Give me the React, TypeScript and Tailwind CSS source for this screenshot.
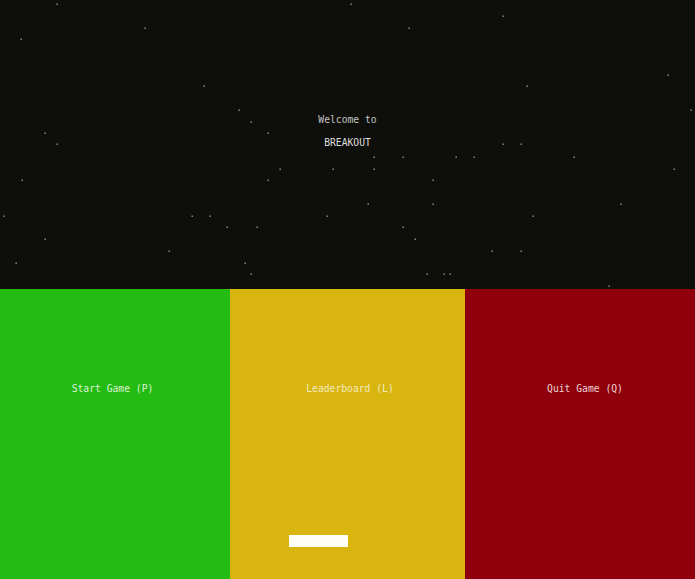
const stars: [number, number][] = [
  [57, 4], [145, 28], [21, 39], [204, 86], [239, 110], [251, 122], [268, 133], [45, 133], [57, 144],
  [351, 4], [503, 16], [409, 28], [668, 75], [527, 86], [691, 110], [503, 144], [521, 144],
  [280, 169], [333, 169], [22, 180], [268, 180], [4, 216], [192, 216], [210, 216], [327, 216],
  [227, 227], [257, 227], [45, 239], [169, 251], [16, 263], [245, 263], [251, 274],
  [374, 157], [403, 157], [456, 157], [474, 157], [574, 157], [374, 169], [674, 169], [433, 180],
  [368, 204], [433, 204], [621, 204], [533, 216], [403, 227], [415, 239], [492, 251], [521, 251],
  [427, 274], [444, 274], [450, 274], [609, 286],
];

const mono = { fontFamily: '"DejaVu Sans Mono", monospace' };

export default function App() {
  return (
    <div className="w-[695px] h-[579px] bg-[#0e0f0b] overflow-hidden" style={mono}>
      <div className="relative h-[289px] flex flex-col items-center pt-[114px] gap-[11px] text-[9.7px] leading-[12px]">
        <svg className="absolute inset-0" width="695" height="289">
          {stars.map(([x, y], i) => (
            <rect key={i} x={x - 0.5} y={y - 0.5} width="1.4" height="1.4" fill="#9a9a9a" />
          ))}
        </svg>
        <span className="relative text-[#c4c4c4]">Welcome to</span>
        <span className="relative text-[#dedede]">BREAKOUT</span>
      </div>
      <div className="grid grid-cols-[230px_235px_230px] h-[290px] text-[9.7px] leading-[12px]">
        <div className="bg-[#24bc12] flex justify-center pt-[94px] pr-[5px] text-[#dcefd6]">Start Game (P)</div>
        <div className="relative bg-[#d8b60f] flex justify-center pt-[94px] pl-[5px] text-[#f3e9c0]">
          Leaderboard (L)
          <div className="absolute left-[59px] top-[246px] w-[59px] h-[12px] bg-[#fffff8]" />
        </div>
        <div className="bg-[#90000c] flex justify-center pt-[94px] pl-[10px] text-[#eed4d4]">Quit Game (Q)</div>
      </div>
    </div>
  );
}
